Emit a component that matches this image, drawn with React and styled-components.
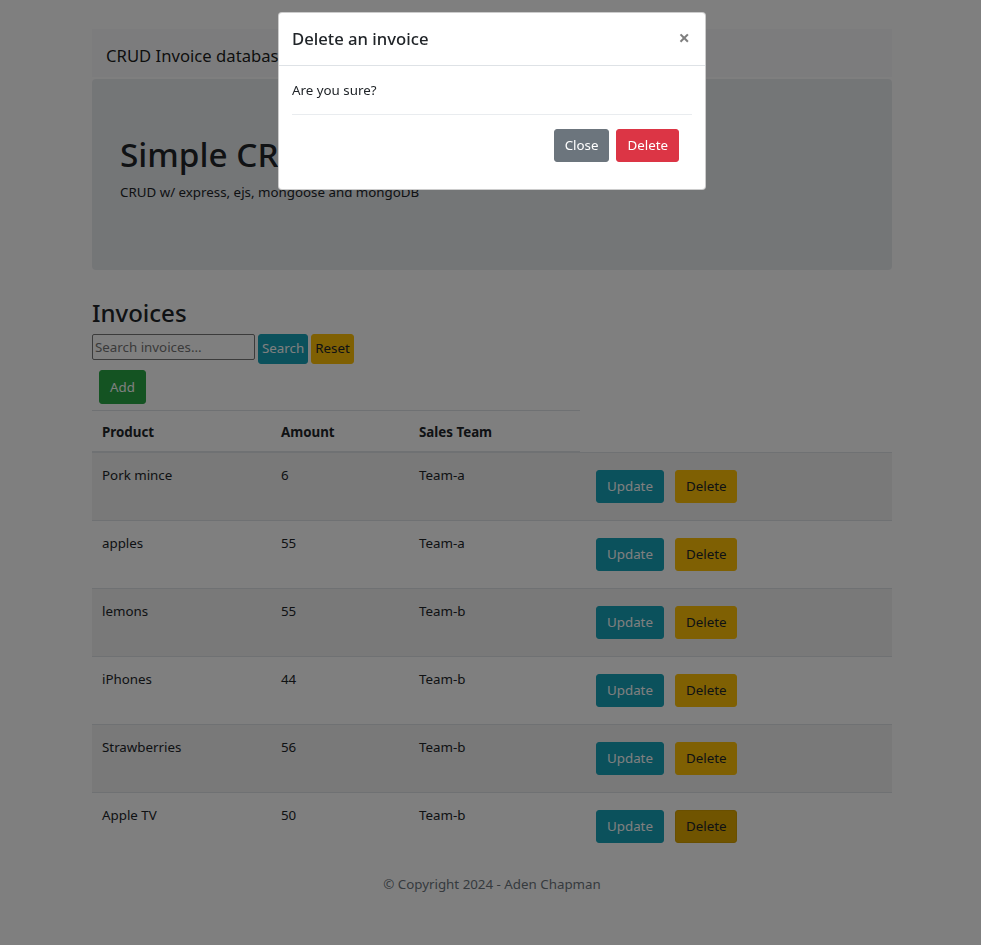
import React from "react";
import styled, { createGlobalStyle, css } from "styled-components";

const GlobalStyle = createGlobalStyle`
  * { box-sizing: border-box; }
  html, body { margin: 0; padding: 0; }
  body {
    background: #ffffff;
    color: #212529;
    font-family: "Noto Sans", "Open Sans", sans-serif;
    font-size: 13.33px;
    line-height: 1.5;
  }
`;

const Page = styled.div`
  min-height: 945px;
  padding-top: 29px;
  padding-left: 3px;
`;

const Container = styled.div`
  width: 800px;
  margin: 0 auto;
`;

const Navbar = styled.nav`
  height: 48px;
  background: #f8f9fa;
  display: flex;
  align-items: center;
  padding: 0 14px;
`;

const Brand = styled.span`
  font-size: 16.67px;
  color: rgba(0, 0, 0, 0.9);
  line-height: 1;
  padding-top: 6px;
`;

const Jumbotron = styled.header`
  margin-top: 2px;
  height: 191px;
  background: #e9ecef;
  border-radius: 4px;
  padding: 56px 28px 0;
  margin-bottom: 27px;
`;

const Display = styled.h1`
  margin: 0;
  font-size: 33.3px;
  font-weight: 500;
  line-height: 1.2;
`;

const Lead = styled.p`
  margin: 8px 0 0;
  font-size: 13.33px;
`;

const SectionTitle = styled.h2`
  margin: 0 0 5px;
  font-size: 24px;
  font-weight: 500;
  line-height: 32px;
`;

const SearchRow = styled.form`
  display: flex;
  align-items: flex-start;
  gap: 3px;
`;

const SearchInput = styled.input`
  width: 163px;
  height: 26px;
  border: 1px solid #767676;
  border-radius: 2px;
  font-family: inherit;
  font-size: 13.33px;
  padding: 1px 2px;
  color: #212529;
  &::placeholder { color: #757575; }
`;

const variants = {
  info: css`background: #17a2b8; border-color: #17a2b8; color: #fff;`,
  warning: css`background: #ffc107; border-color: #ffc107; color: #212529;`,
  warningActive: css`background: #e0a800; border-color: #d39e00; color: #212529;`,
  success: css`background: #28a745; border-color: #28a745; color: #fff;`,
  secondary: css`background: #6c757d; border-color: #6c757d; color: #fff;`,
  danger: css`background: #dc3545; border-color: #dc3545; color: #fff;`,
};

const Button = styled.button`
  font-family: inherit;
  font-size: 13.33px;
  line-height: 21px;
  border: 1px solid transparent;
  border-radius: 3px;
  padding: ${(p) => (p.$small ? "3px 3px 4px" : "5px 10px")};
  cursor: pointer;
  ${(p) => variants[p.$variant]}
`;

const AddButton = styled(Button)`
  height: 34px;
`;

const AddWrap = styled.div`
  padding: 6px 0 6px 7px;
`;

const Table = styled.table`
  width: 800px;
  border-collapse: collapse;
`;

const Th = styled.th`
  text-align: left;
  font-weight: 700;
  padding: 11px 10px 9px;
  line-height: 20px;
  vertical-align: bottom;
  border-top: 1px solid #dee2e6;
  border-bottom: 2px solid #dee2e6;
  width: ${(p) => p.$w}px;
`;

const Tr = styled.tr`
  &:nth-of-type(odd) { background: rgba(0, 0, 0, 0.05); }
`;

const Td = styled.td`
  padding: 13px 10px 10px;
  vertical-align: top;
  border-top: 1px solid #dee2e6;
`;

const ActionTd = styled(Td)`
  padding: 10px;
`;

const Actions = styled.div`
  display: flex;
  gap: 11px;
  padding: 7px 6px;
`;

const Footer = styled.footer`
  text-align: center;
  color: #6c757d;
  padding-top: 15px;
`;

const Backdrop = styled.div`
  position: fixed;
  inset: 0;
  background: rgba(0, 0, 0, 0.5);
`;

const ModalLayer = styled.div`
  position: fixed;
  inset: 0;
  display: flex;
  justify-content: center;
  align-items: flex-start;
  padding: 12px 0 0 3px;
`;

const Modal = styled.div`
  width: 428px;
  background: #fff;
  border: 1px solid rgba(0, 0, 0, 0.2);
  border-radius: 4px;
`;

const ModalHeader = styled.div`
  display: flex;
  align-items: center;
  justify-content: space-between;
  height: 53px;
  padding: 0 15px 0 13px;
  border-bottom: 1px solid #dee2e6;
`;

const ModalTitle = styled.h5`
  margin: 0;
  font-size: 16.67px;
  font-weight: 500;
  line-height: 1.2;
`;

const CloseX = styled.button`
  background: none;
  border: 0;
  font-family: inherit;
  font-size: 20px;
  font-weight: 700;
  line-height: 1;
  color: #000;
  opacity: 0.5;
  padding: 0 0 2px;
`;

const ModalBody = styled.div`
  padding: 15px 13px 0;
`;

const BodyText = styled.p`
  margin: 0 0 13px;
`;

const Divider = styled.hr`
  margin: 0;
  border: 0;
  border-top: 1px solid #e9ecef;
`;

const ModalFooter = styled.div`
  display: flex;
  justify-content: flex-end;
  gap: 7px;
  padding: 14px 26px 27px;
`;

const invoices = [
  { product: "Pork mince", amount: 6, team: "Team-a" },
  { product: "apples", amount: 55, team: "Team-a" },
  { product: "lemons", amount: 55, team: "Team-b" },
  { product: "iPhones", amount: 44, team: "Team-b" },
  { product: "Strawberries", amount: 56, team: "Team-b" },
  { product: "Apple TV", amount: 50, team: "Team-b" },
];

export default function App() {
  return (
    <>
      <GlobalStyle />
      <Page>
        <Container>
          <Navbar>
            <Brand>CRUD Invoice database</Brand>
          </Navbar>
          <Jumbotron>
            <Display>Simple CRUD</Display>
            <Lead>CRUD w/ express, ejs, mongoose and mongoDB</Lead>
          </Jumbotron>
          <SectionTitle>Invoices</SectionTitle>
          <SearchRow onSubmit={(e) => e.preventDefault()}>
            <SearchInput placeholder="Search invoices..." />
            <Button $variant="info" $small type="submit">Search</Button>
            <Button $variant="warning" $small type="button">Reset</Button>
          </SearchRow>
          <AddWrap>
            <AddButton $variant="success">Add</AddButton>
          </AddWrap>
          <Table>
            <thead>
              <tr>
                <Th $w={179}>Product</Th>
                <Th $w={138}>Amount</Th>
                <Th $w={171}>Sales Team</Th>
              </tr>
            </thead>
            <tbody>
              {invoices.map((inv, i) => (
                <Tr key={inv.product}>
                  <Td>{inv.product}</Td>
                  <Td>{inv.amount}</Td>
                  <Td>{inv.team}</Td>
                  <ActionTd>
                    <Actions>
                      <Button $variant="info">Update</Button>
                      <Button $variant={i === invoices.length - 1 ? "warningActive" : "warning"}>Delete</Button>
                    </Actions>
                  </ActionTd>
                </Tr>
              ))}
            </tbody>
          </Table>
          <Footer>© Copyright 2024 - Aden Chapman</Footer>
        </Container>
      </Page>
      <Backdrop />
      <ModalLayer>
        <Modal>
          <ModalHeader>
            <ModalTitle>Delete an invoice</ModalTitle>
            <CloseX aria-label="Close">×</CloseX>
          </ModalHeader>
          <ModalBody>
            <BodyText>Are you sure?</BodyText>
            <Divider />
          </ModalBody>
          <ModalFooter>
            <Button $variant="secondary">Close</Button>
            <Button $variant="danger">Delete</Button>
          </ModalFooter>
        </Modal>
      </ModalLayer>
    </>
  );
}
